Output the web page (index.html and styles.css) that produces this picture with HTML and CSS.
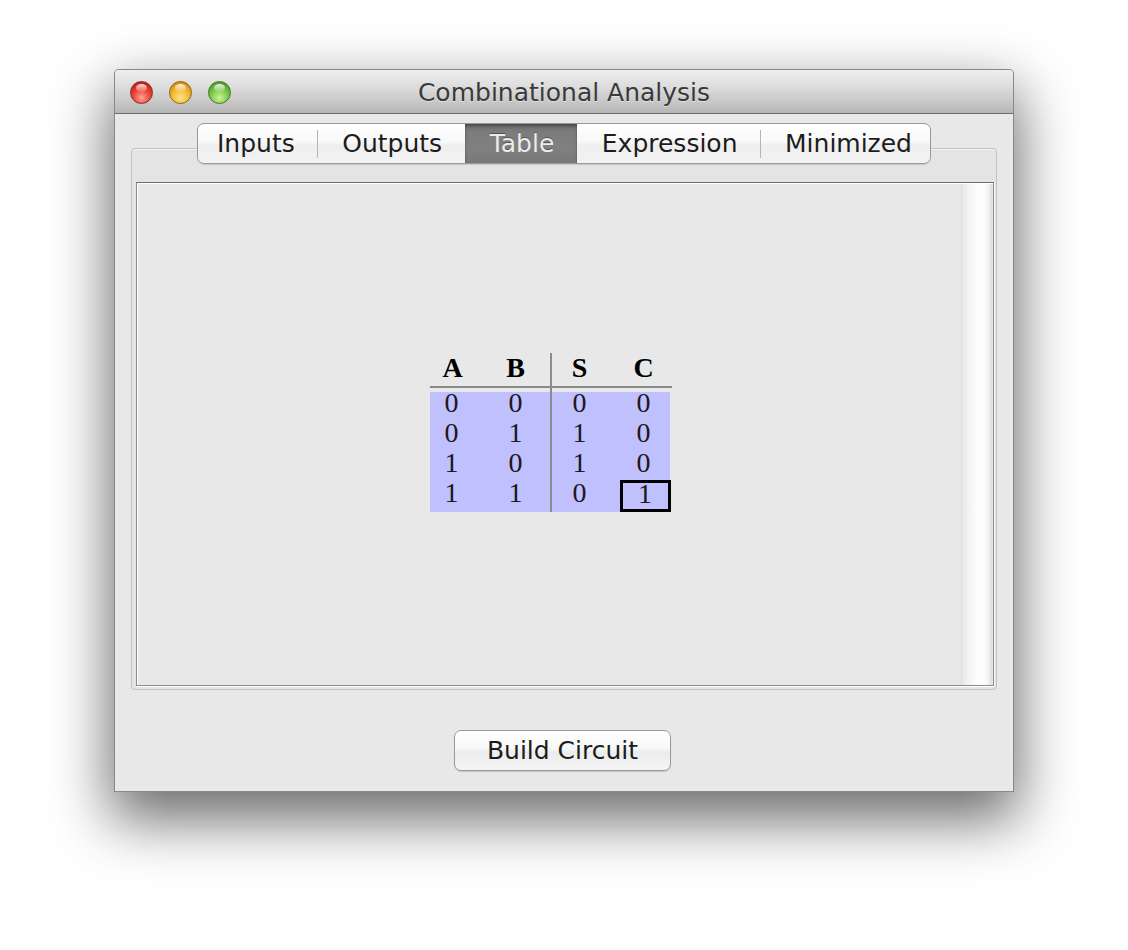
FILE: index.html
```html
<!DOCTYPE html>
<html>
<head>
<meta charset="utf-8">
<title>Combinational Analysis</title>
<link rel="stylesheet" href="styles.css">
</head>
<body>
<div class="window">
  <div class="titlebar">
    <div class="lights">
      <span class="light red"></span>
      <span class="light yellow"></span>
      <span class="light green"></span>
    </div>
    <div class="title">Combinational Analysis</div>
    <div class="spacer"></div>
  </div>
  <div class="content">
    <div class="tabs">
      <div class="tab">Inputs</div>
      <div class="tab">Outputs</div>
      <div class="tab active">Table</div>
      <div class="tab">Expression</div>
      <div class="tab">Minimized</div>
    </div>
    <div class="group">
      <div class="scrollpane">
        <div class="viewport">
          <div class="truth">
            <div class="thead">
              <span>A</span><span>B</span><span>S</span><span>C</span>
            </div>
            <div class="tbody">
              <span>0</span><span>0</span><span>0</span><span>0</span>
              <span>0</span><span>1</span><span>1</span><span>0</span>
              <span>1</span><span>0</span><span>1</span><span>0</span>
              <span>1</span><span>1</span><span>0</span><span class="selected">1</span>
            </div>
            <div class="divider"></div>
          </div>
        </div>
        <div class="scrolltrack"></div>
      </div>
    </div>
    <div class="actions">
      <button class="btn">Build Circuit</button>
    </div>
  </div>
</div>
</body>
</html>
```
FILE: styles.css
```css
html, body {
  margin: 0;
  padding: 0;
  background: #ffffff;
}

body {
  width: 1128px;
  height: 950px;
  overflow: hidden;
  font-family: "DejaVu Sans", "Liberation Sans", sans-serif;
}

.window {
  box-sizing: border-box;
  width: 900px;
  height: 723px;
  margin: 69px 0 0 114px;
  border: 1px solid rgba(0, 0, 0, 0.42);
  border-radius: 5px 5px 0 0;
  background: #e8e8e8;
  display: flex;
  flex-direction: column;
  box-shadow: 0 24px 58px 4px rgba(0, 0, 0, 0.58);
}

.titlebar {
  height: 43px;
  border-bottom: 1px solid #6a6a6a;
  border-radius: 4px 4px 0 0;
  background: linear-gradient(to bottom, #eeeeee 0%, #dcdcdc 40%, #c4c4c4 80%, #b6b6b6 100%);
  display: grid;
  grid-template-columns: 1fr auto 1fr;
  align-items: center;
}

.lights {
  display: flex;
  gap: 16px;
  padding-left: 15px;
  padding-top: 1px;
}

.light {
  box-sizing: border-box;
  width: 23px;
  height: 23px;
  border-radius: 50%;
  position: relative;
}

.light::after {
  content: "";
  position: absolute;
  left: 5px;
  top: 2px;
  width: 11px;
  height: 8px;
  border-radius: 50%;
  background: linear-gradient(to bottom, rgba(255, 255, 255, 0.85), rgba(255, 255, 255, 0.1));
}

.red {
  border: 1px solid #8e2a22;
  background: radial-gradient(circle at 50% 75%, #ffa49a 0%, #ef4c40 40%, #cc2418 75%, #9a1a12 100%);
}

.yellow {
  border: 1px solid #8f6418;
  background: radial-gradient(circle at 50% 75%, #ffe590 0%, #f7bd3a 40%, #dc9612 75%, #a56d0c 100%);
}

.green {
  border: 1px solid #3f7a22;
  background: radial-gradient(circle at 50% 75%, #ccf59a 0%, #86cf52 40%, #56a42f 75%, #3a781d 100%);
}

.title {
  font-size: 25px;
  color: #3a3a3a;
  padding-top: 2px;
  text-shadow: 0 1px 0 rgba(255, 255, 255, 0.45);
}

.content {
  flex: 1;
  display: flex;
  flex-direction: column;
  padding: 9px 16px 20px 16px;
  min-height: 0;
}

.tabs {
  position: relative;
  z-index: 1;
  align-self: center;
  display: flex;
  height: 41px;
  box-sizing: border-box;
  border: 1px solid #9a9a9a;
  border-radius: 7px;
  background: linear-gradient(to bottom, #ffffff 0%, #f8f8f8 45%, #eeeeee 55%, #f3f3f3 100%);
  overflow: hidden;
  box-shadow: 0 1px 1px rgba(0, 0, 0, 0.12);
}

.tab {
  position: relative;
  padding: 0 22.5px 0 25px;
  font-size: 25px;
  line-height: 39px;
  color: #1c1c1c;
}

.tab:first-child {
  padding-left: 19px;
}

.tab:last-child {
  padding-right: 18px;
}

.tab + .tab::before {
  content: "";
  position: absolute;
  left: 0;
  top: 6px;
  bottom: 5px;
  width: 1px;
  background: #b4b4b4;
}

.tab.active {
  color: #ececec;
  background: linear-gradient(to bottom, #6c6c6c 0%, #7c7c7c 20%, #808080 60%, #787878 100%);
  box-shadow: inset 0 2px 3px rgba(0, 0, 0, 0.35);
  text-shadow: 0 -1px 0 rgba(0, 0, 0, 0.35);
}

.tab.active::before,
.tab.active + .tab::before {
  display: none;
}

.group {
  flex: 1;
  margin-top: -16px;
  border: 1px solid #c3c3c3;
  border-radius: 4px;
  background: #e4e4e4;
  padding: 33px 2px 3px 4px;
  display: flex;
  box-shadow: inset 0 1px 0 #f4f4f4;
}

.scrollpane {
  flex: 1;
  display: flex;
  border: 1px solid #8a8a8a;
  border-top-color: #6c6c6c;
  background: #e8e8e8;
  box-shadow: inset 1px 1px 0 #ffffff, 0 1px 0 #ffffff, 1px 0 0 #f6f6f6;
}

.viewport {
  flex: 1;
  display: flex;
  align-items: center;
  justify-content: center;
  padding: 0 0 3px 3px;
}

.scrolltrack {
  width: 31px;
  margin: 1px 1px 0 0;
  background: linear-gradient(to right, #d6d6d6 0px, #e6e6e6 1px, #f2f2f2 7px, #fdfdfd 16px, #ffffff 22px, #f4f4f4 27px, #dedede 31px);
}

.truth {
  position: relative;
  width: 242px;
  font-family: "Liberation Serif", "Times New Roman", serif;
  font-size: 28px;
}

.thead {
  display: grid;
  grid-template-columns: repeat(4, 44px);
  column-gap: 20px;
  height: 33px;
  line-height: 29px;
  border-bottom: 2px solid #8a8a8a;
  font-weight: bold;
  color: #000;
  text-align: center;
}

.thead span:first-child {
  padding-left: 2px;
}

.tbody {
  margin-top: 4px;
  width: 240px;
  display: grid;
  grid-template-columns: repeat(4, 44px);
  grid-auto-rows: 30px;
  column-gap: 20px;
  background: #c0c0ff;
  line-height: 21px;
  color: #1a1a1a;
  text-align: center;
}

.tbody .selected {
  margin: -2px -5px 0 -2px;
  border: 3px solid #000;
  line-height: 21px;
}

.divider {
  position: absolute;
  left: 120px;
  top: 0;
  bottom: 0;
  width: 2px;
  background: #8c8c8c;
}

.actions {
  display: flex;
  justify-content: center;
  margin-top: 40px;
}

.btn {
  box-sizing: border-box;
  height: 41px;
  padding: 0 32px;
  border: 1px solid #9a9a9a;
  border-radius: 7px;
  background: linear-gradient(to bottom, #ffffff 0%, #f7f7f7 45%, #ececec 55%, #f4f4f4 100%);
  font-family: "DejaVu Sans", "Liberation Sans", sans-serif;
  font-size: 25px;
  color: #1c1c1c;
  box-shadow: 0 1px 1px rgba(0, 0, 0, 0.15);
  margin-left: -3px;
}
```
